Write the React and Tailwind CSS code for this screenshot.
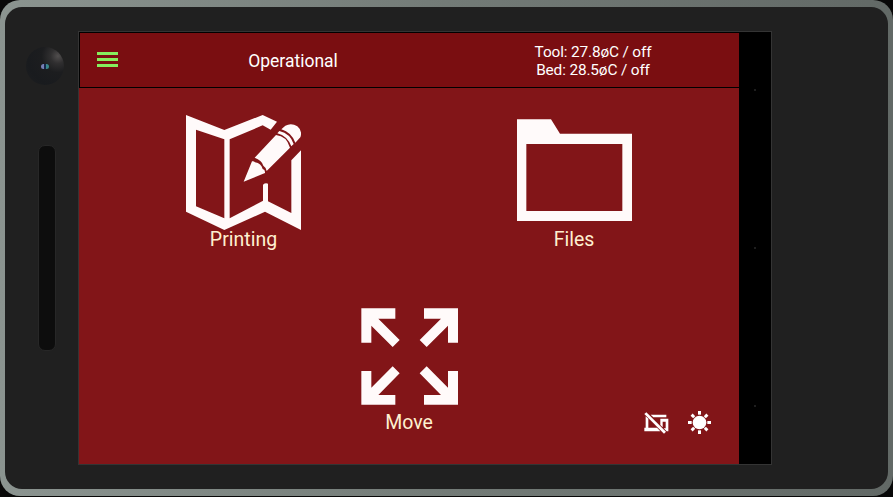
import React from "react";

function PrintingIcon() {
  return (
    <svg className="block h-[115px] w-[115px]" viewBox="48 45 345 345" fill="#fffafa">
      <path
        fillRule="evenodd"
        d="M48 45 L163 90 L278 45 L321 65 L302 89 L278 76 L179 118 V355 L285 299 L364 339 V181 L393 151 V390 L285 335 L163 390 L48 335 Z M78 89 V319 L163 355 V118 Z"
      />
      <path d="M279 254 Q286 248 294 251 V308 H279 Z" />
      <path d="M221 245 L246 184 Q251 182 255 187 Q274 190 278 207 Q286 209 285 219 Z" />
      <path d="M254 173 L318 105 Q350 108 360 143 L290 213 Q287 201 280 197 Q275 180 254 173 Z" />
      <path d="M322 100 L328 93 Q361 101 371 132 L364 139 Q352 108 322 100 Z" />
      <path d="M334 88 L346 77 Q364 67 382 79 Q398 92 391 112 L376 128 Q364 97 334 88 Z" />
    </svg>
  );
}

function FolderIcon() {
  return (
    <svg className="block h-[103px] w-[115px]" viewBox="51 57 345 309">
      <path
        fill="#fffafa"
        fillRule="evenodd"
        d="M51 58 H153 L180 101 H396 V363 H51 Z M79 132 V333 H367 V132 Z"
      />
    </svg>
  );
}

function MoveIcon() {
  return (
    <svg className="block h-[97px] w-[98px]" viewBox="47 39 294 291" fill="#fffafa">
      <path d="M48 40 H150 V71 H99 L163 135 L142 156 L78 92 V143 H48 Z" />
      <path d="M338 40 H236 V71 H287 L223 135 L244 156 L308 92 V143 H338 Z" />
      <path d="M48 329 H150 V300 H99 L163 235 L142 214 L78 278 V228 H48 Z" />
      <path d="M338 329 H236 V300 H287 L223 235 L244 214 L308 278 V228 H338 Z" />
    </svg>
  );
}

function DevicesOffIcon() {
  return (
    <svg className="block h-[22px] w-[25px]" viewBox="41 67 75 66" fill="#ffffff">
      <path d="M61 75 H108 V83 H69 Z M46 80 L54 87 V114 H80 L90 125 H42 V114 H46 Z" />
      <path d="M90 87 H114 V125 H109 L100 116 H106 V96 H97 V113 L90 106 Z" />
      <path d="M42 73 L48 68 L107 126 L101 132 Z" />
    </svg>
  );
}

function BrightnessIcon() {
  const rays = [0, 45, 90, 135, 180, 225, 270, 315];
  return (
    <svg className="block h-[23px] w-[23px]" viewBox="174 64 69 69" fill="#ffffff">
      <circle cx="208.5" cy="98.5" r="20.5" />
      {rays.map((angle) => (
        <rect
          key={angle}
          x="204"
          y={angle % 90 ? 65 : 64}
          width="9"
          height="11"
          transform={`rotate(${angle} 208.5 98.5)`}
        />
      ))}
    </svg>
  );
}

function MenuButton() {
  return (
    <button aria-label="Menu" className="ml-[17px] flex w-[21px] flex-col gap-[3px] pb-px">
      <span className="h-[3px] w-full bg-[#86ee5d]" />
      <span className="h-[3px] w-full bg-[#86ee5d]" />
      <span className="h-[3px] w-full bg-[#86ee5d]" />
    </button>
  );
}

function Tile({ label, children }) {
  return (
    <button className="flex flex-col items-center text-[19.5px] leading-6 text-[#fff0d0]">
      {children}
      <span className="whitespace-nowrap">{label}</span>
    </button>
  );
}

function Header() {
  return (
    <header className="flex h-14 shrink-0 items-center border border-r-0 border-black bg-[#7a0e11] text-white">
      <MenuButton />
      <div className="ml-[90px] w-[330px] pt-0.5 text-center text-[17.5px] leading-5">
        <div className="w-[170px]">Operational</div>
      </div>
      <div className="-ml-[23px] w-[156px] pt-px text-center text-[15.4px] leading-[18px] tracking-[-0.15px]">
        <div>Tool: 27.8øC / off</div>
        <div>Bed: 28.5øC / off</div>
      </div>
    </header>
  );
}

function Earpiece() {
  return (
    <div className="flex w-[73px] shrink-0 flex-col items-start">
      <div className="ml-[21px] mt-10 flex h-[38px] w-[38px] items-center justify-center rounded-full bg-[radial-gradient(circle_at_84%_24%,#514e4e_0%,#302f30_17%,#1c1d1f_38%,#191b1e_70%,#1d1e20_100%)]">
        <div className="flex h-[5px] w-2 overflow-hidden rounded-full">
          <span className="h-full flex-1 bg-[#7780b5]" />
          <span className="h-full w-0.5 bg-[#15264b]" />
          <span className="h-full flex-1 bg-[#39868a]" />
        </div>
      </div>
      <div className="ml-[33px] mt-[60px] h-[206px] w-[18px] rounded-[7px] border border-[#272727] bg-[#0d0d0d]" />
    </div>
  );
}

function NavigationBar() {
  return (
    <div className="flex h-full w-8 shrink-0 flex-col items-center justify-between bg-black pb-[57px] pt-[57px]">
      <span className="h-0.5 w-0.5 rounded-full bg-[#292929]" />
      <span className="h-0.5 w-0.5 rounded-full bg-[#292929]" />
      <span className="h-0.5 w-0.5 rounded-full bg-[#292929]" />
    </div>
  );
}

export default function App() {
  return (
    <div className="h-[497px] w-[893px] overflow-hidden bg-[#080808] font-[Roboto,sans-serif]">
      <div className="h-[496px] w-full rounded-[20px] bg-[linear-gradient(90deg,#8b9490_0%,#737b77_50%,#626966_100%)] px-[5px] pb-[7px] pt-[7px]">
        <div className="flex h-full w-full rounded-[17px] bg-[#202020]">
          <Earpiece />
          <div className="mt-6 flex h-[434px] w-[694px] border border-[#343434]">
            <main className="flex w-[660px] shrink-0 flex-col bg-[#821518]">
              <Header />
              <div className="mt-[27px] grid h-[135px] grid-cols-[329px_331px] justify-items-center">
                <Tile label="Printing">
                  <div className="h-[113px]">
                    <PrintingIcon />
                  </div>
                </Tile>
                <div className="pl-px">
                  <Tile label="Files">
                    <div className="flex h-[113px] items-start pt-1">
                      <FolderIcon />
                    </div>
                  </Tile>
                </div>
              </div>
              <div className="grid grow grid-cols-[1fr_98px_1fr] pt-[58px]">
                <div />
                <Tile label="Move">
                  <div className="-mr-px h-[103px] pl-px">
                    <MoveIcon />
                  </div>
                </Tile>
                <div className="flex items-center justify-end gap-[19px] pr-7 pt-[73px]">
                  <DevicesOffIcon />
                  <BrightnessIcon />
                </div>
              </div>
            </main>
            <NavigationBar />
          </div>
        </div>
      </div>
    </div>
  );
}
